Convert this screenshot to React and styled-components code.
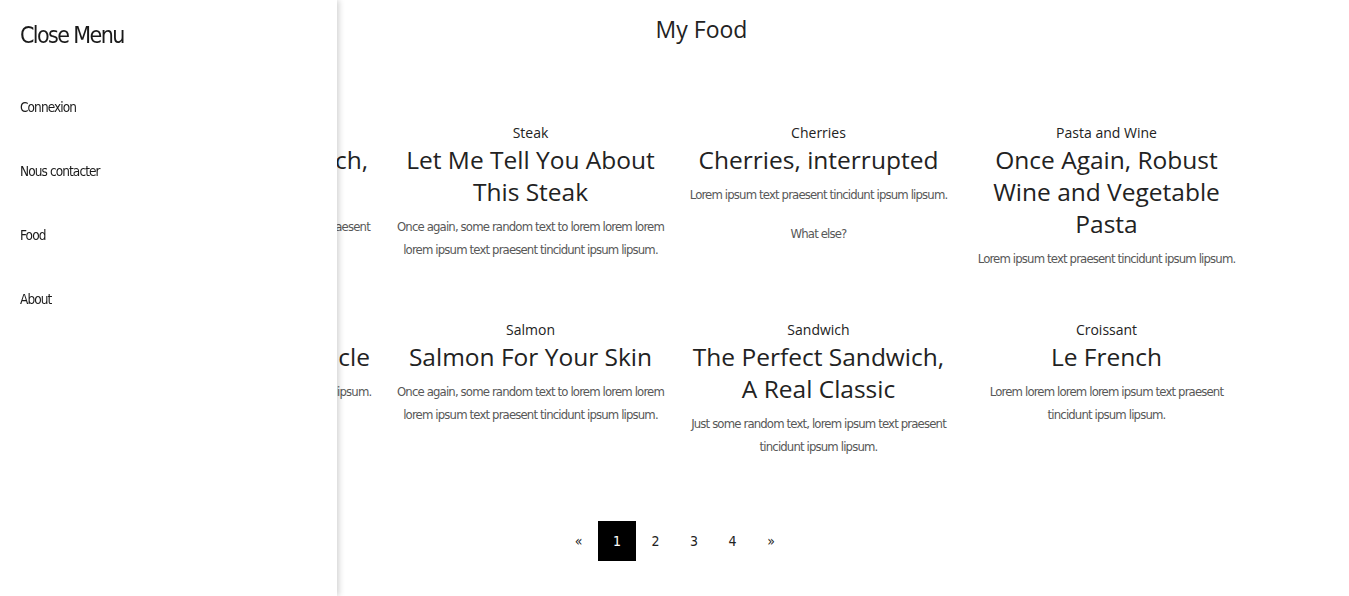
import React from "react";
import styled, { createGlobalStyle } from "styled-components";

const narrow = `"DejaVu Sans Condensed", "Liberation Sans", sans-serif`;
const sans = `"Open Sans", "Noto Sans", sans-serif`;

const GlobalStyle = createGlobalStyle`
  html, body {
    margin: 0;
    padding: 0;
    background: #fff;
    overflow: hidden;
  }
  * {
    box-sizing: border-box;
  }
`;

const Page = styled.div`
  width: 100%;
  height: 596px;
  position: relative;
  font-family: ${sans};
  color: #222;
`;

const Main = styled.main`
  display: flex;
  flex-direction: column;
  align-items: center;
  padding-top: 13px;
`;

const PageTitle = styled.h1`
  margin: 0 0 0 54px;
  font-size: 23px;
  font-weight: 400;
  line-height: 32px;
`;

const Grid = styled.div`
  display: grid;
  grid-template-columns: repeat(4, 288px);
  row-gap: 49px;
  margin-top: 77px;
`;

const Card = styled.article`
  display: flex;
  flex-direction: column;
  align-items: center;
  text-align: center;
  padding: 0 10px;
`;

const Category = styled.span`
  font-size: 14px;
  line-height: 22px;
`;

const CardTitle = styled.h2`
  margin: 0;
  font-size: 24.5px;
  font-weight: 400;
  line-height: 32px;
`;

const Text = styled.p`
  margin: 7px 0 0;
  font-family: ${narrow};
  font-size: 13px;
  letter-spacing: -0.85px;
  line-height: 23px;
  color: #585858;

  & + & {
    margin-top: 16px;
  }
`;

const Pagination = styled.nav`
  display: flex;
  margin-top: 63px;
`;

const PageLink = styled.a`
  display: flex;
  align-items: center;
  justify-content: center;
  width: 38.5px;
  height: 40px;
  font-family: ${narrow};
  font-size: 14px;
  letter-spacing: -0.5px;
  color: ${(p) => (p.$active ? "#fff" : "#222")};
  background: ${(p) => (p.$active ? "#000" : "transparent")};
  text-decoration: none;
`;

const SideMenu = styled.aside`
  position: fixed;
  top: 0;
  left: 0;
  bottom: 0;
  width: 337px;
  background: #fff;
  box-shadow: 2px 0 6px rgba(0, 0, 0, 0.18);
  padding: 18px 20px;
  font-family: ${narrow};
  color: #1a1a1a;
`;

const MenuTitle = styled.div`
  font-size: 23px;
  letter-spacing: -1.6px;
  line-height: 34px;
`;

const MenuList = styled.ul`
  list-style: none;
  margin: 45px 0 0;
  padding: 0;
  display: flex;
  flex-direction: column;
  gap: 44px;
`;

const MenuItem = styled.li`
  font-size: 13.5px;
  letter-spacing: -0.9px;
  line-height: 20px;
`;

const cards = [
  {
    cat: "Sandwich",
    title: "The Perfect Sandwich, A Real Classic",
    text: ["Just some random text, lorem ipsum text praesent tincidunt ipsum lipsum."],
  },
  {
    cat: "Steak",
    title: "Let Me Tell You About This Steak",
    text: ["Once again, some random text to lorem lorem lorem lorem ipsum text praesent tincidunt ipsum lipsum."],
  },
  {
    cat: "Cherries",
    title: "Cherries, interrupted",
    text: ["Lorem ipsum text praesent tincidunt ipsum lipsum.", "What else?"],
  },
  {
    cat: "Pasta and Wine",
    title: "Once Again, Robust Wine and Vegetable Pasta",
    text: ["Lorem ipsum text praesent tincidunt ipsum lipsum."],
  },
  {
    cat: "Article",
    title: "Another Simple Article",
    text: ["Lorem ipsum text praesent tincidunt ipsum lipsum."],
  },
  {
    cat: "Salmon",
    title: "Salmon For Your Skin",
    text: ["Once again, some random text to lorem lorem lorem lorem ipsum text praesent tincidunt ipsum lipsum."],
  },
  {
    cat: "Sandwich",
    title: "The Perfect Sandwich, A Real Classic",
    text: ["Just some random text, lorem ipsum text praesent tincidunt ipsum lipsum."],
  },
  {
    cat: "Croissant",
    title: "Le French",
    text: ["Lorem lorem lorem lorem ipsum text praesent tincidunt ipsum lipsum."],
  },
];

const pages = ["«", "1", "2", "3", "4", "»"];
const menu = ["Connexion", "Nous contacter", "Food", "About"];

export default function App() {
  return (
    <Page>
      <GlobalStyle />
      <Main>
        <PageTitle>My Food</PageTitle>
        <Grid>
          {cards.map((c, i) => (
            <Card key={i}>
              <Category>{c.cat}</Category>
              <CardTitle>{c.title}</CardTitle>
              {c.text.map((t, j) => (
                <Text key={j}>{t}</Text>
              ))}
            </Card>
          ))}
        </Grid>
        <Pagination>
          {pages.map((p) => (
            <PageLink key={p} href="#" $active={p === "1"}>
              {p}
            </PageLink>
          ))}
        </Pagination>
      </Main>
      <SideMenu>
        <MenuTitle>Close Menu</MenuTitle>
        <MenuList>
          {menu.map((m) => (
            <MenuItem key={m}>{m}</MenuItem>
          ))}
        </MenuList>
      </SideMenu>
    </Page>
  );
}
